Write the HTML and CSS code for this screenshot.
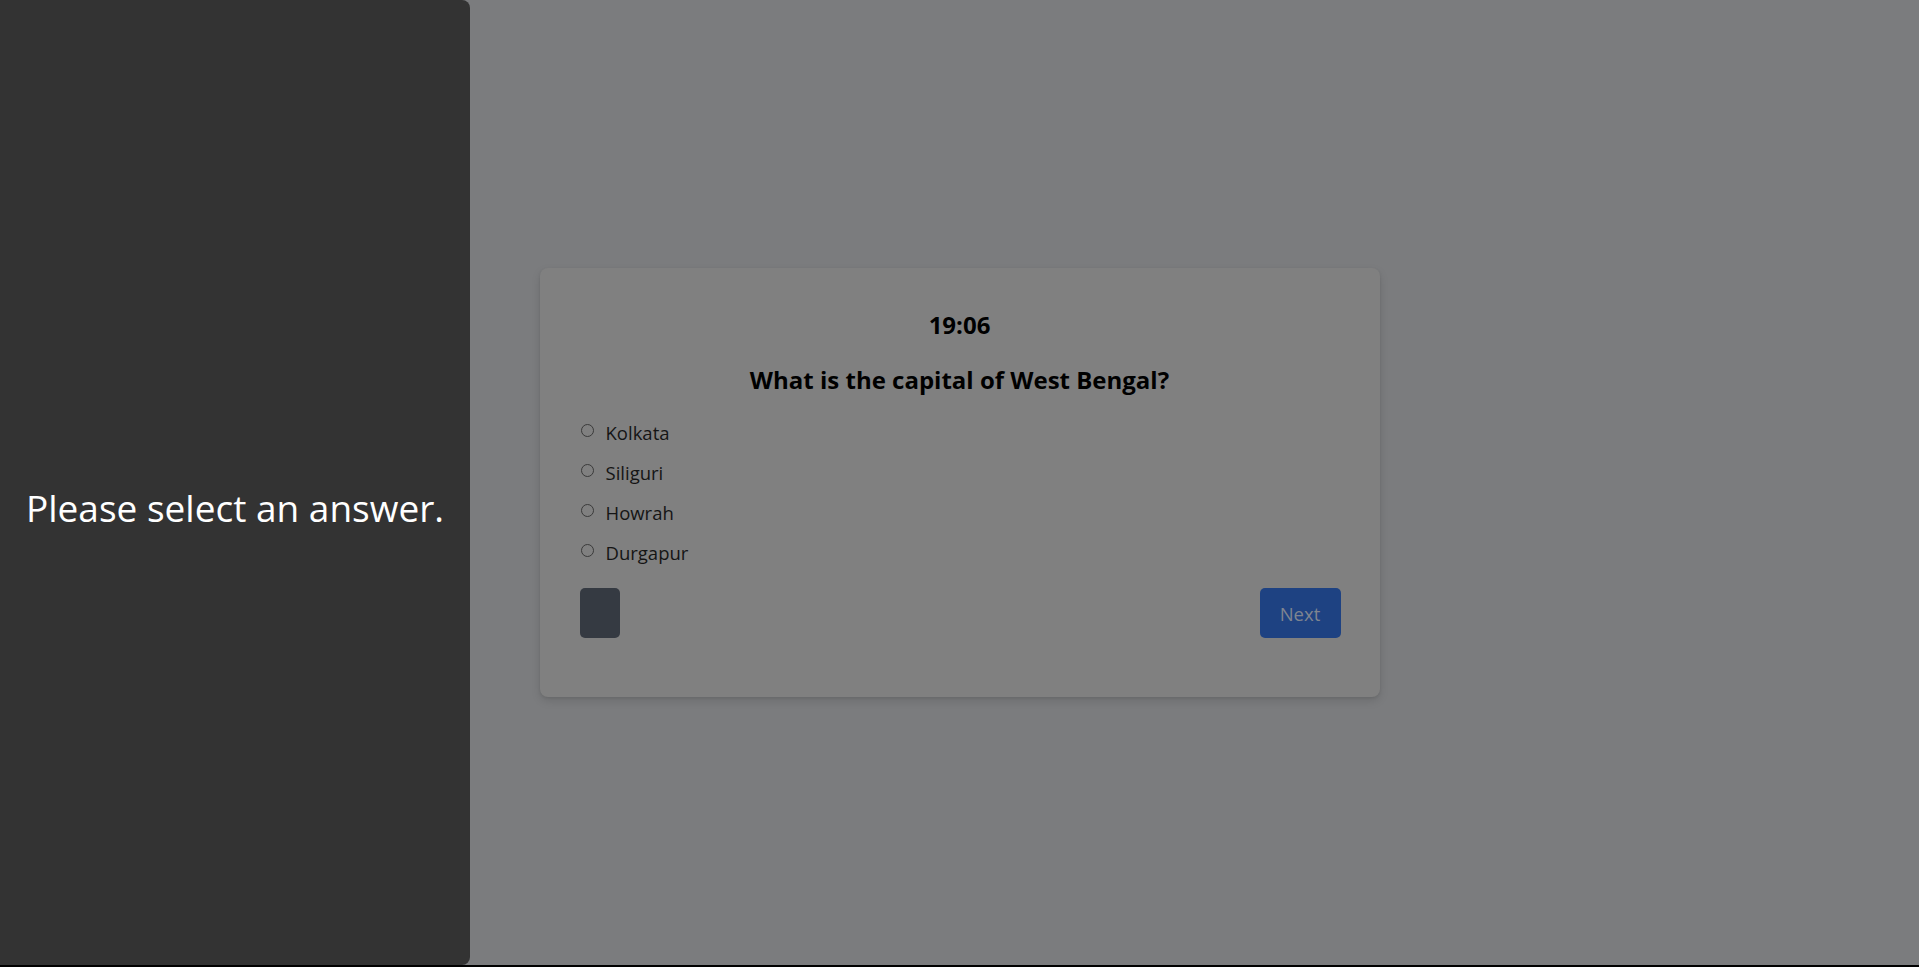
FILE: index.html
```html
<!DOCTYPE html>
<html lang="en">
<head>
<meta charset="utf-8">
<title>Quiz</title>
<link rel="stylesheet" href="styles.css">
</head>
<body>
<main class="page">
  <section class="card">
    <div class="timer">19:06</div>
    <h2 class="question">What is the capital of West Bengal?</h2>
    <ul class="options">
      <li><label class="option"><input type="radio" name="answer" class="radio"><span>Kolkata</span></label></li>
      <li><label class="option"><input type="radio" name="answer" class="radio"><span>Siliguri</span></label></li>
      <li><label class="option"><input type="radio" name="answer" class="radio"><span>Howrah</span></label></li>
      <li><label class="option"><input type="radio" name="answer" class="radio"><span>Durgapur</span></label></li>
    </ul>
    <div class="actions">
      <button class="btn btn-prev" type="button"></button>
      <button class="btn btn-next" type="button">Next</button>
    </div>
  </section>
</main>
<aside class="toast">
  <p class="toast-text">Please select an answer.</p>
</aside>
</body>
</html>
```

FILE: styles.css
```css
html {
  background: #000;
}
body {
  margin: 0;
  font-family: "Open Sans", "Noto Sans", sans-serif;
}
.page {
  height: 965px;
  background: #7b7c7e;
  display: flex;
  align-items: center;
  justify-content: center;
}
.card {
  width: 760px;
  padding: 40px 40px 59px;
  background: #808080;
  border-radius: 8px;
  box-shadow: 0 4px 10px rgba(0, 0, 0, 0.12), 0 1px 3px rgba(0, 0, 0, 0.08);
  box-sizing: content-box;
}
.timer {
  text-align: center;
  font-size: 24px;
  font-weight: 700;
  line-height: 32px;
  color: #000;
  padding-top: 1px;
}
.question {
  margin: 23px 0 0;
  text-align: center;
  font-size: 24px;
  font-weight: 700;
  line-height: 32px;
  color: #000;
}
.options {
  list-style: none;
  margin: 22px 0 0;
  padding: 0;
  display: flex;
  flex-direction: column;
  gap: 12px;
}
.option {
  display: flex;
  align-items: center;
  height: 28px;
  font-size: 18.5px;
  color: #151515;
}
.radio {
  appearance: none;
  -webkit-appearance: none;
  width: 13px;
  height: 13px;
  margin: -4px 12px 0 1px;
  border: 1px solid #3a3a3a;
  border-radius: 50%;
  background: transparent;
  box-sizing: border-box;
  flex: none;
}
.actions {
  margin-top: 22px;
  display: flex;
  justify-content: space-between;
  align-items: center;
}
.btn {
  height: 50px;
  border: none;
  border-radius: 5px;
  font-family: inherit;
  font-size: 18.5px;
  padding: 0;
}
.btn-prev {
  width: 40px;
  background: #353a42;
}
.btn-next {
  width: 81px;
  background: #1e4282;
  color: #7f8590;
  margin-right: -1px;
}
.toast {
  position: fixed;
  top: 0;
  left: 0;
  width: 470px;
  height: 965px;
  background: #333333;
  border-radius: 0 8px 8px 0;
  display: flex;
  align-items: center;
  justify-content: center;
}
.toast-text {
  margin: 52px 0 0;
  color: #fff;
  font-size: 37px;
  line-height: 1.2;
}
```
